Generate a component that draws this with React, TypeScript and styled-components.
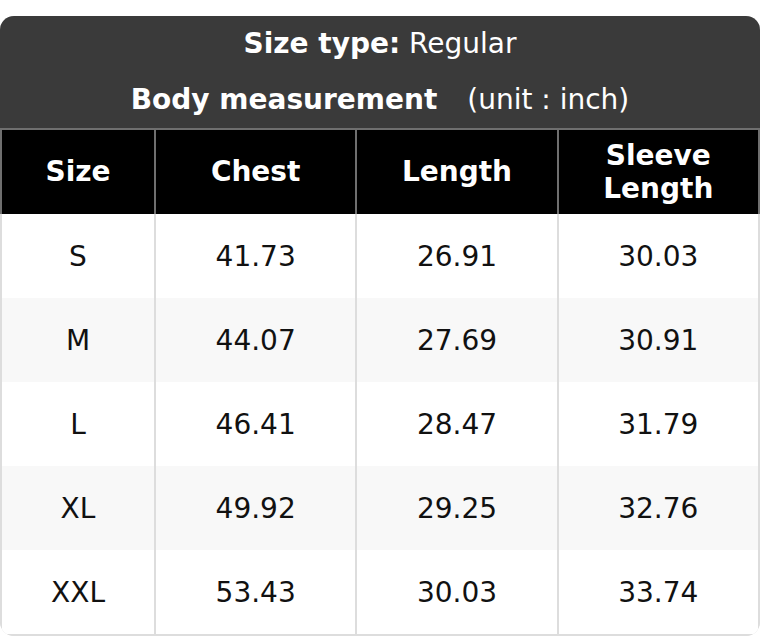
import React from "react";
import styled, { createGlobalStyle } from "styled-components";

const Global = createGlobalStyle`
  html, body { margin: 0; padding: 0; background: #ffffff; }
  body { font-family: "DejaVu Sans", Verdana, sans-serif; }
`;

const Page = styled.div`
  padding-top: 16px;
  width: 760px;
`;

const Card = styled.div`
  border-radius: 14px;
  overflow: hidden;
  background: #dddddd;
  font-size: 28px;
`;

const Title = styled.div`
  background: #3a3a3a;
  color: #ffffff;
  text-align: center;
`;

const TitleLine = styled.div`
  line-height: 56px;
  white-space: nowrap;
`;

const Strong = styled.span`
  font-weight: bold;
`;

const Unit = styled.span`
  margin-left: 30px;
`;

const Row = styled.div<{ $head?: boolean; $last?: boolean }>`
  display: grid;
  grid-template-columns: 152px repeat(3, 1fr);
  column-gap: 2px;
  padding: ${(p) => (p.$head ? "2px 2px 0" : p.$last ? "0 2px 2px" : "0 2px")};
  background: ${(p) => (p.$head ? "#6f6f6f" : "#dddddd")};
  border-bottom-left-radius: ${(p) => (p.$last ? "14px" : "0")};
  border-bottom-right-radius: ${(p) => (p.$last ? "14px" : "0")};
`;

const Cell = styled.div<{ $head?: boolean; $stripe?: boolean }>`
  box-sizing: border-box;
  height: 84px;
  padding-top: ${(p) => (p.$head ? "1px" : "2px")};
  display: flex;
  align-items: center;
  justify-content: center;
  text-align: center;
  line-height: 1.17;
  background: ${(p) => (p.$head ? "#000000" : p.$stripe ? "#f8f8f8" : "#ffffff")};
  color: ${(p) => (p.$head ? "#ffffff" : "#111111")};
  font-weight: ${(p) => (p.$head ? "bold" : "normal")};
`;

const headers = ["Size", "Chest", "Length", "Sleeve\nLength"];
const rows = [
  ["S", "41.73", "26.91", "30.03"],
  ["M", "44.07", "27.69", "30.91"],
  ["L", "46.41", "28.47", "31.79"],
  ["XL", "49.92", "29.25", "32.76"],
  ["XXL", "53.43", "30.03", "33.74"],
];

export default function App() {
  return (
    <Page>
      <Global />
      <Card>
        <Title>
          <TitleLine>
            <Strong>Size type:</Strong> Regular
          </TitleLine>
          <TitleLine>
            <Strong>Body measurement</Strong>
            <Unit>(unit : inch)</Unit>
          </TitleLine>
        </Title>
        <Row $head>
          {headers.map((h) => (
            <Cell $head key={h}>
              {h.split("\n").map((part, i) => (
                <React.Fragment key={i}>
                  {i > 0 && <br />}
                  {part}
                </React.Fragment>
              ))}
            </Cell>
          ))}
        </Row>
        {rows.map((r, i) => (
          <Row key={r[0]} $last={i === rows.length - 1}>
            {r.map((v, j) => (
              <Cell key={j} $stripe={i % 2 === 1}>
                {v}
              </Cell>
            ))}
          </Row>
        ))}
      </Card>
    </Page>
  );
}
